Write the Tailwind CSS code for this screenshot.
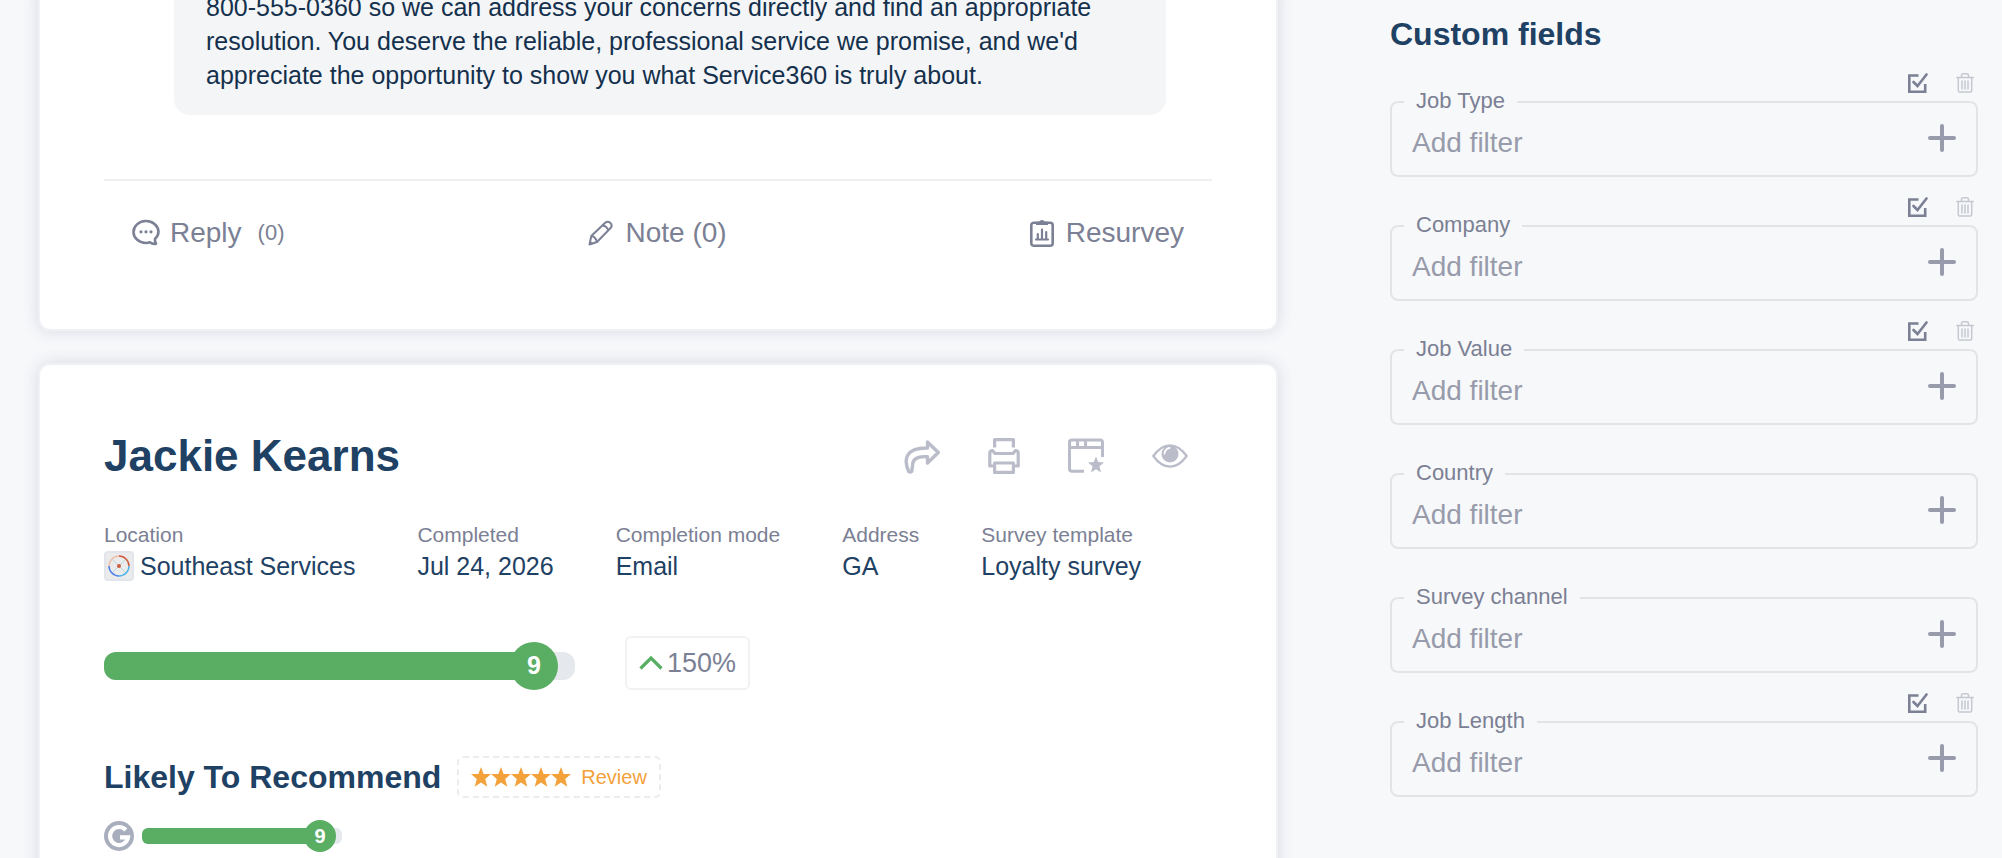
<!DOCTYPE html>
<html lang="en">
<head>
    <meta charset="UTF-8">
    <meta name="viewport" content="width=device-width, initial-scale=1.0">
    <title>Survey responses</title>
    <script src="https://cdn.jsdelivr.net/npm/@tailwindcss/browser@4"></script>
</head>
<body class="bg-[#f7f8fa] h-screen overflow-hidden font-['Liberation_Sans',Arial,sans-serif] text-[#1e4164]">

    <!-- Shared icons -->
    <svg class="hidden" xmlns="http://www.w3.org/2000/svg">
        <symbol id="icon-edit" viewBox="0 0 20 20">
            <path d="M10.500 2.500H1.300v16.200H17.200V11" fill="none" stroke="currentColor" stroke-width="2.600"/>
            <path d="M5.500 9l4 4L18.500 1.500" fill="none" stroke="currentColor" stroke-width="2.600" stroke-linecap="round"/>
        </symbol>
        <symbol id="icon-trash" viewBox="0 0 18 20">
            <path d="M.7 4.500h16.600M2.300 4.500v13.300q0 1.300 1.300 1.300h10.800q1.300 0 1.300-1.300V4.500M5.500 4.200V2.500Q5.500.8 7.200.8h3.600q1.700 0 1.700 1.700v1.700M6 8v8M9 8v8M12 8v8" fill="none" stroke="currentColor" stroke-width="1.500" stroke-linecap="round"/>
        </symbol>
        <symbol id="icon-plus" viewBox="0 0 28 28">
            <path d="M14 2v24M2 14h24" fill="none" stroke="currentColor" stroke-width="4" stroke-linecap="round"/>
        </symbol>
        <symbol id="icon-star" viewBox="0 0 20 20">
            <path d="M10 0l2.600 7H20l-5.800 5 2.100 7.800L10 15.500l-6.300 4.300L5.800 12 0 7h7.400z" fill="currentColor"/>
        </symbol>
    </svg>

    <div class="flex h-full pl-[38px] pr-6 gap-28">
        <main class="flex-1 min-w-0">

            <!-- Previous response -->
            <article class="-mt-3 bg-white border-2 border-[#f0f1f4] rounded-b-xl shadow-[0_0_16px_rgba(60,65,110,0.16)] px-16 pb-20">
                <div class="ml-[70px] mr-[46px] px-8 pb-[23px] bg-[#f3f5f7] rounded-b-2xl">
                    <p class="text-[25px] leading-[34px] text-[#14304c]">800-555-0360 so we can address your concerns directly and find an appropriate<br>resolution. You deserve the reliable, professional service we promise, and we'd<br>appreciate the opportunity to show you what Service360 is truly about.</p>
                </div>
                <div class="mt-16 pt-9 px-7 border-t-2 border-[#eff0f2] flex justify-between text-[28px] leading-8 text-[#7b8094]">
                    <button class="flex items-center">
                        <svg class="w-7 h-7 mr-2.5" viewBox="0 0 28 28" fill="none" stroke="currentColor">
                            <path d="M18 23.300Q16 24 14 24A12.500 11 0 1 1 26.500 12.500q0 4-3.500 7.400-.5 2 1 4.800-3 .8-6-1.400z" stroke-width="2.600" stroke-linejoin="round"/>
                            <path d="M9 12.800h.01M14 12.800h.01M19 12.800h.01" stroke-width="3.200" stroke-linecap="round"/>
                        </svg>
                        Reply
                        <span class="ml-4 text-[22px]">(0)</span>
                    </button>
                    <button class="flex items-center">
                        <svg class="w-[26px] h-[26px] mr-3" viewBox="0 0 26 26" fill="none" stroke="currentColor" stroke-width="2" stroke-linejoin="round">
                            <path d="M1.500 24.500l1.800-8.500L17.200 2.800q2.400-2.200 5 0t.6 5L9 22z"/>
                            <path d="M14.500 5.500q4.500.5 5.800 5M3.300 16q4.500.8 5.700 6M2 22l2.500 2"/>
                        </svg>
                        Note (0)
                    </button>
                    <button class="flex items-center">
                        <svg class="w-6 h-7 mr-3" viewBox="0 0 24 28">
                            <rect x="1.300" y="3.800" width="21.400" height="22.900" rx="2.500" fill="none" stroke="currentColor" stroke-width="2.600"/>
                            <path d="M6 2.800h3.200a3 3 0 0 1 5.600 0H18V6H6z" fill="currentColor"/>
                            <path d="M6 20.500h12M7.800 20v-5M12 20v-9.500M16.200 20v-7" fill="none" stroke="currentColor" stroke-width="2.200" stroke-linecap="round"/>
                        </svg>
                        Resurvey
                    </button>
                </div>
            </article>

            <!-- Current response -->
            <article class="mt-8 h-[600px] bg-white border-2 border-[#f0f1f4] rounded-xl shadow-[0_0_16px_rgba(60,65,110,0.16)] px-16 pt-[67px]">
                <header class="flex items-center justify-between pr-6">
                    <h1 class="text-[44px] leading-[48px] font-bold">Jackie Kearns</h1>
                    <div class="flex items-center gap-12 text-[#babdc9]">
                        <button aria-label="Share">
                            <svg class="w-9 h-9" viewBox="0 0 36 36" fill="none" stroke="currentColor" stroke-width="3.400" stroke-linejoin="round">
                                <path d="M23.500 4L34.300 14.500 23.500 25v-6.200C13 18 8.500 21 8.500 28l-.8 5.500q-1.500 1.200-3 0C-.5 22 1 9.500 23.500 10z"/>
                            </svg>
                        </button>
                        <button aria-label="Print">
                            <svg class="w-8 h-9" viewBox="0 0 32 36" fill="none" stroke="currentColor" stroke-width="3.200" stroke-linejoin="round">
                                <path d="M6.600 9.500V1.600h18.800v7.900"/>
                                <path d="M6.500 28H1.800V15.500q0-3 2.700-3l2.500 3h18l2.500-3q2.700 0 2.700 3V28h-4.700"/>
                                <path d="M6.600 25h18.800v9.400H6.600z"/>
                            </svg>
                        </button>
                        <button aria-label="Add to showcase">
                            <svg class="w-9 h-9" viewBox="0 0 36 36">
                                <path d="M16 33.200H4q-2.500 0-2.500-2.500V4Q1.500 2 4 2h28q2.500 0 2.500 2.500V19M1.500 9.500h33M9.500 2v7M17.500 2v7" fill="none" stroke="currentColor" stroke-width="3"/>
                                <path d="M28 18.500l2.200 5.500 5.800.4-4.500 3.800 1.500 6.300-5-3.300-5 3.300 1.500-6.300-4.500-3.800 5.800-.4z" fill="currentColor"/>
                            </svg>
                        </button>
                        <button aria-label="View">
                            <svg class="w-9 h-6" viewBox="0 0 36 24">
                                <path d="M1.300 12Q9 1.300 18 1.300T34.700 12Q27 22.700 18 22.700T1.300 12z" fill="none" stroke="currentColor" stroke-width="2.200" stroke-linejoin="round"/>
                                <circle cx="18" cy="10" r="8.500" fill="currentColor"/>
                                <path d="M12.500 9.500q.5-4.500 5-5.500" fill="none" stroke="#fff" stroke-width="1.800" stroke-linecap="round"/>
                            </svg>
                        </button>
                    </div>
                </header>

                <dl class="mt-[43px] flex gap-[62px] text-[25px] leading-[30px]">
                    <div class="flex flex-col gap-1">
                        <dt class="text-[21px] leading-6 text-[#7b8094]">Location</dt>
                        <dd class="flex items-center gap-1.5">
                            <svg class="w-[30px] h-[30px]" viewBox="0 0 30 30" fill="none">
                                <rect x="1" y="1" width="28" height="28" rx="3" fill="#ebebeb" stroke="#e3e5ec" stroke-width="2"/>
                                <path d="M8 8l14 14M22 8L8 22" stroke="#b9d6e2"/>
                                <path d="M15 5a10 10 0 0 1 10 10" stroke="#cf5a3c" stroke-width="1.500"/>
                                <path d="M25 15a10 10 0 0 1-10 10" stroke="#4bb4ea" stroke-width="1.500"/>
                                <path d="M15 25A10 10 0 0 1 5 15" stroke="#4a7de8" stroke-width="1.500"/>
                                <path d="M5 15A10 10 0 0 1 15 5" stroke="#edc0ab" stroke-width="1.500"/>
                                <circle cx="15" cy="15" r="2" fill="#cf5a3c"/>
                            </svg>
                            Southeast Services
                        </dd>
                    </div>
                    <div class="flex flex-col gap-1">
                        <dt class="text-[21px] leading-6 text-[#7b8094]">Completed</dt>
                        <dd>Jul 24, 2026</dd>
                    </div>
                    <div class="flex flex-col gap-1">
                        <dt class="text-[21px] leading-6 text-[#7b8094]">Completion mode</dt>
                        <dd>Email</dd>
                    </div>
                    <div class="flex flex-col gap-1">
                        <dt class="text-[21px] leading-6 text-[#7b8094]">Address</dt>
                        <dd>GA</dd>
                    </div>
                    <div class="flex flex-col gap-1">
                        <dt class="text-[21px] leading-6 text-[#7b8094]">Survey template</dt>
                        <dd>Loyalty survey</dd>
                    </div>
                </dl>

                <!-- Overall score -->
                <div class="mt-[55px] flex items-end gap-[50px]">
                    <div class="relative w-[471px] h-12 flex items-center" role="meter" aria-label="Overall score" aria-valuemin="0" aria-valuemax="10" aria-valuenow="9">
                        <div class="w-full h-7 rounded-xl bg-[#e5e9ee] overflow-hidden">
                            <div class="h-full bg-[#59ae64]" style="width: 92%"></div>
                        </div>
                        <span class="absolute right-[17px] size-12 rounded-full bg-[#59ae64] flex items-center justify-center text-[25px] font-bold text-white">9</span>
                    </div>
                    <div class="h-[54px] px-3 flex items-center gap-1 border-2 border-[#f1f2f4] rounded-md text-[27px] leading-8 text-[#7b8094]">
                        <svg class="w-6 h-4" viewBox="0 0 24 16" fill="none" stroke="#59ae64" stroke-width="3.200">
                            <path d="M1.500 13.500L12 3l10.500 10.500"/>
                        </svg>
                        150%
                    </div>
                </div>

                <!-- Question -->
                <div class="mt-[66px] flex items-center gap-4">
                    <h2 class="text-[32px] leading-9 font-bold">Likely To Recommend</h2>
                    <a href="#" class="h-[42px] px-3 flex items-center gap-2.5 border-2 border-dashed border-[#ebecf0] rounded-md text-xl leading-6 text-[#f3a13b]">
                        <span class="flex">
                            <svg class="size-5"><use href="#icon-star"/></svg>
                            <svg class="size-5"><use href="#icon-star"/></svg>
                            <svg class="size-5"><use href="#icon-star"/></svg>
                            <svg class="size-5"><use href="#icon-star"/></svg>
                            <svg class="size-5"><use href="#icon-star"/></svg>
                        </span>
                        Review
                    </a>
                </div>
                <div class="mt-[22px] flex items-center gap-2">
                    <svg class="w-[30px] h-[30px]" viewBox="0 0 30 30" fill="none">
                        <circle cx="15" cy="15" r="15" fill="#a9aebe"/>
                        <path d="M21.800 9A9 9 0 1 0 24 16.300h-8" stroke="#fff" stroke-width="4.200"/>
                    </svg>
                    <div class="relative w-[200px] h-8 flex items-center" role="meter" aria-label="Likely to recommend" aria-valuemin="0" aria-valuemax="10" aria-valuenow="9">
                        <div class="w-full h-4 rounded-md bg-[#e5e9ee] overflow-hidden">
                            <div class="h-full bg-[#59ae64]" style="width: 90%"></div>
                        </div>
                        <span class="absolute right-1.5 size-8 rounded-full bg-[#59ae64] flex items-center justify-center text-xl font-bold text-white">9</span>
                    </div>
                </div>
            </article>
        </main>

        <!-- Filters -->
        <aside class="w-[588px] shrink-0 pt-4">
            <h2 class="text-[32px] leading-9 font-bold">Custom fields</h2>
            <div class="mt-[38px] flex flex-col gap-[37px]">
                <div class="relative">
                    <fieldset class="h-[87px] px-3 border-2 border-[#e2e4e7] rounded-lg">
                        <legend class="px-3 pb-0.5 text-[22px] leading-[22px] text-[#7b8094]"><label for="job-type">Job Type</label></legend>
                        <div class="flex items-start justify-between px-2">
                            <input id="job-type" type="text" placeholder="Add filter" class="min-w-0 flex-1 mt-[13px] text-[28px] leading-8 bg-transparent outline-none placeholder:text-[#979bab]">
                            <button class="mt-2.5 text-[#979bab]" aria-label="Add Job Type filter"><svg class="size-7"><use href="#icon-plus"/></svg></button>
                        </div>
                    </fieldset>
                    <div class="absolute right-1 -top-[17px] flex gap-7">
                        <button class="text-[#7b8094]" aria-label="Edit Job Type"><svg class="size-5"><use href="#icon-edit"/></svg></button>
                        <button class="text-[#c6c8d1]" aria-label="Delete Job Type"><svg class="w-[18px] h-5"><use href="#icon-trash"/></svg></button>
                    </div>
                </div>
                <div class="relative">
                    <fieldset class="h-[87px] px-3 border-2 border-[#e2e4e7] rounded-lg">
                        <legend class="px-3 pb-0.5 text-[22px] leading-[22px] text-[#7b8094]"><label for="company">Company</label></legend>
                        <div class="flex items-start justify-between px-2">
                            <input id="company" type="text" placeholder="Add filter" class="min-w-0 flex-1 mt-[13px] text-[28px] leading-8 bg-transparent outline-none placeholder:text-[#979bab]">
                            <button class="mt-2.5 text-[#979bab]" aria-label="Add Company filter"><svg class="size-7"><use href="#icon-plus"/></svg></button>
                        </div>
                    </fieldset>
                    <div class="absolute right-1 -top-[17px] flex gap-7">
                        <button class="text-[#7b8094]" aria-label="Edit Company"><svg class="size-5"><use href="#icon-edit"/></svg></button>
                        <button class="text-[#c6c8d1]" aria-label="Delete Company"><svg class="w-[18px] h-5"><use href="#icon-trash"/></svg></button>
                    </div>
                </div>
                <div class="relative">
                    <fieldset class="h-[87px] px-3 border-2 border-[#e2e4e7] rounded-lg">
                        <legend class="px-3 pb-0.5 text-[22px] leading-[22px] text-[#7b8094]"><label for="job-value">Job Value</label></legend>
                        <div class="flex items-start justify-between px-2">
                            <input id="job-value" type="text" placeholder="Add filter" class="min-w-0 flex-1 mt-[13px] text-[28px] leading-8 bg-transparent outline-none placeholder:text-[#979bab]">
                            <button class="mt-2.5 text-[#979bab]" aria-label="Add Job Value filter"><svg class="size-7"><use href="#icon-plus"/></svg></button>
                        </div>
                    </fieldset>
                    <div class="absolute right-1 -top-[17px] flex gap-7">
                        <button class="text-[#7b8094]" aria-label="Edit Job Value"><svg class="size-5"><use href="#icon-edit"/></svg></button>
                        <button class="text-[#c6c8d1]" aria-label="Delete Job Value"><svg class="w-[18px] h-5"><use href="#icon-trash"/></svg></button>
                    </div>
                </div>
                <fieldset class="h-[87px] px-3 border-2 border-[#e2e4e7] rounded-lg">
                    <legend class="px-3 pb-0.5 text-[22px] leading-[22px] text-[#7b8094]"><label for="country">Country</label></legend>
                    <div class="flex items-start justify-between px-2">
                        <input id="country" type="text" placeholder="Add filter" class="min-w-0 flex-1 mt-[13px] text-[28px] leading-8 bg-transparent outline-none placeholder:text-[#979bab]">
                        <button class="mt-2.5 text-[#979bab]" aria-label="Add Country filter"><svg class="size-7"><use href="#icon-plus"/></svg></button>
                    </div>
                </fieldset>
                <fieldset class="h-[87px] px-3 border-2 border-[#e2e4e7] rounded-lg">
                    <legend class="px-3 pb-0.5 text-[22px] leading-[22px] text-[#7b8094]"><label for="survey-channel">Survey channel</label></legend>
                    <div class="flex items-start justify-between px-2">
                        <input id="survey-channel" type="text" placeholder="Add filter" class="min-w-0 flex-1 mt-[13px] text-[28px] leading-8 bg-transparent outline-none placeholder:text-[#979bab]">
                        <button class="mt-2.5 text-[#979bab]" aria-label="Add Survey channel filter"><svg class="size-7"><use href="#icon-plus"/></svg></button>
                    </div>
                </fieldset>
                <div class="relative">
                    <fieldset class="h-[87px] px-3 border-2 border-[#e2e4e7] rounded-lg">
                        <legend class="px-3 pb-0.5 text-[22px] leading-[22px] text-[#7b8094]"><label for="job-length">Job Length</label></legend>
                        <div class="flex items-start justify-between px-2">
                            <input id="job-length" type="text" placeholder="Add filter" class="min-w-0 flex-1 mt-[13px] text-[28px] leading-8 bg-transparent outline-none placeholder:text-[#979bab]">
                            <button class="mt-2.5 text-[#979bab]" aria-label="Add Job Length filter"><svg class="size-7"><use href="#icon-plus"/></svg></button>
                        </div>
                    </fieldset>
                    <div class="absolute right-1 -top-[17px] flex gap-7">
                        <button class="text-[#7b8094]" aria-label="Edit Job Length"><svg class="size-5"><use href="#icon-edit"/></svg></button>
                        <button class="text-[#c6c8d1]" aria-label="Delete Job Length"><svg class="w-[18px] h-5"><use href="#icon-trash"/></svg></button>
                    </div>
                </div>
            </div>
        </aside>
    </div>
</body>
</html>
